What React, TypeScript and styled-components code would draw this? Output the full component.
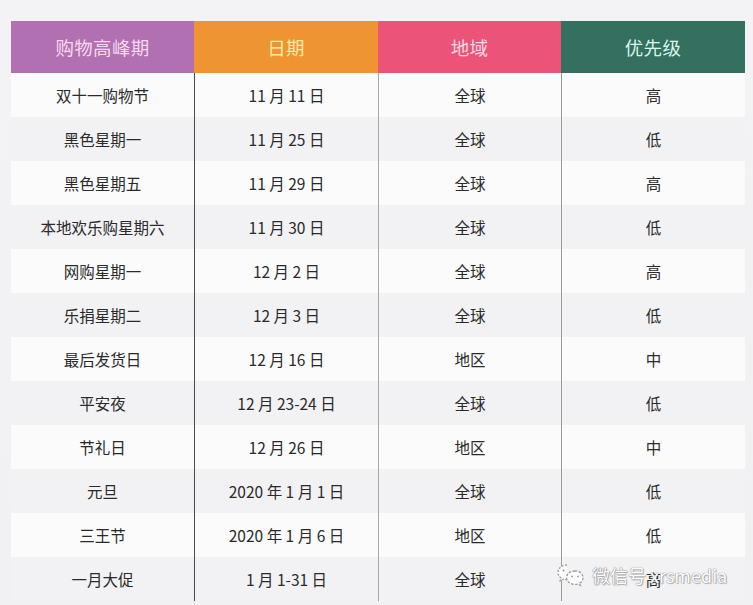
import React from "react";
import styled, { createGlobalStyle } from "styled-components";

const GlobalStyle = createGlobalStyle`
  html, body {
    margin: 0;
    padding: 0;
    background: #f1f0f2;
    font-family: "Noto Sans CJK SC", "Noto Sans", sans-serif;
  }
`;

const Page = styled.div`
  position: relative;
  width: 753px;
  height: 605px;
  overflow: hidden;
  padding: 21px 0 0 11px;
  box-sizing: border-box;
  background: linear-gradient(180deg, #f3f2f4 0%, #f1f0f3 100%);
`;

const Table = styled.div`
  width: 734px;
  display: grid;
  grid-template-columns: 183px 184px 183px 184px;
`;

const HeadCell = styled.div<{ $bg: string; $fg: string }>`
  height: 52px;
  display: flex;
  align-items: center;
  justify-content: center;
  background: ${(p) => p.$bg};
  color: ${(p) => p.$fg};
  font-size: 18.5px;
  letter-spacing: 0.3px;
`;

const Cell = styled.div<{ $line?: string; $shade: boolean }>`
  height: 44px;
  display: flex;
  align-items: center;
  justify-content: center;
  box-sizing: border-box;
  border-left: ${(p) => (p.$line ? `1px solid ${p.$line}` : "none")};
  background: ${(p) => (p.$shade ? "#f2f1f4" : "#fbfbfc")};
  color: #2a2a2a;
  font-size: 15.5px;
`;

const Watermark = styled.div`
  position: absolute;
  left: 556px;
  top: 562px;
  display: flex;
  align-items: center;
  gap: 6px;
  color: #ffffff;
  font-size: 18px;
  text-shadow: 0 0 1px #888, 0 0 1px #888, 1px 1px 1px rgba(0, 0, 0, 0.25);
`;

const heads = [
  { label: "购物高峰期", bg: "#b170b1", fg: "#f8d9f0" },
  { label: "日期", bg: "#ee9432", fg: "#fde9a6" },
  { label: "地域", bg: "#ec5378", fg: "#fdd9e2" },
  { label: "优先级", bg: "#356f60", fg: "#d9f6ea" },
];

const lines = [undefined, "#4a4a4a", "#a8a8aa", "#9a9a9c"];

const rows = [
  ["双十一购物节", "11 月 11 日", "全球", "高"],
  ["黑色星期一", "11 月 25 日", "全球", "低"],
  ["黑色星期五", "11 月 29 日", "全球", "高"],
  ["本地欢乐购星期六", "11 月 30 日", "全球", "低"],
  ["网购星期一", "12 月 2 日", "全球", "高"],
  ["乐捐星期二", "12 月 3 日", "全球", "低"],
  ["最后发货日", "12 月 16 日", "地区", "中"],
  ["平安夜", "12 月 23-24 日", "全球", "低"],
  ["节礼日", "12 月 26 日", "地区", "中"],
  ["元旦", "2020 年 1 月 1 日", "全球", "低"],
  ["三王节", "2020 年 1 月 6 日", "地区", "低"],
  ["一月大促", "1 月 1-31 日", "全球", "高"],
];

function WeChatMark() {
  return (
    <svg width="30" height="26" viewBox="0 0 30 26" fill="none">
      <path
        d="M11 3C5.5 3 2 6.5 2 10.5c0 2.3 1.2 4.2 3 5.5l-0.8 2.8 3.2-1.7c1.1 0.3 2.3 0.5 3.6 0.5"
        stroke="#9a9a9a"
        strokeWidth="1.3"
        strokeDasharray="2 1.5"
        fill="#fff"
      />
      <path
        d="M19 9c-5 0-8.5 3-8.5 6.7s3.5 6.7 8.5 6.7c1 0 2-0.1 2.9-0.4l2.6 1.4-0.6-2.3c2-1.2 3.1-3.1 3.1-5.4C27 12 23.8 9 19 9z"
        stroke="#9a9a9a"
        strokeWidth="1.3"
        strokeDasharray="2.5 1.5"
        fill="#fff"
      />
      <circle cx="7.5" cy="8.5" r="1" fill="#9a9a9a" />
      <circle cx="16" cy="14.5" r="0.9" fill="#9a9a9a" />
      <circle cx="22" cy="14.5" r="0.9" fill="#9a9a9a" />
    </svg>
  );
}

export default function App() {
  return (
    <Page>
      <GlobalStyle />
      <Table>
        {heads.map((h) => (
          <HeadCell key={h.label} $bg={h.bg} $fg={h.fg}>
            {h.label}
          </HeadCell>
        ))}
        {rows.map((row, r) =>
          row.map((text, c) => (
            <Cell key={`${r}-${c}`} $line={lines[c]} $shade={r % 2 === 1}>
              {text}
            </Cell>
          ))
        )}
      </Table>
      <Watermark>
        <WeChatMark />
        <span>微信号 xrsmedia</span>
      </Watermark>
    </Page>
  );
}
